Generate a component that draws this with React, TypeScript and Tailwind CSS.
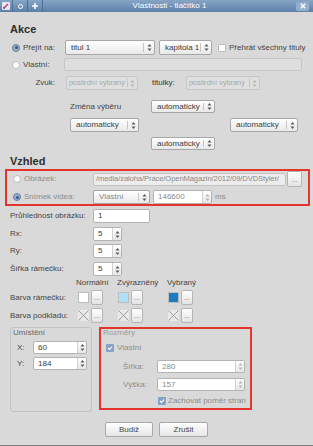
import React from "react";

const Arrows = ({ dim }: { dim?: boolean }) => (
  <svg width="5" height="9" viewBox="0 0 5 9">
    <polygon points="0.5,3.5 2.5,1 4.5,3.5" fill={dim ? "#b5b5b5" : "#5a5a5a"} />
    <polygon points="0.5,5.5 2.5,8 4.5,5.5" fill={dim ? "#b5b5b5" : "#5a5a5a"} />
  </svg>
);

const Select = ({ text, className = "", disabled }: { text: string; className?: string; disabled?: boolean }) => (
  <div
    className={`flex h-full items-center rounded-[2px] border ${
      disabled
        ? "border-[#c6c6c6] bg-[#dfdfdf] text-[#a9a9a9]"
        : "border-[#a6a6a6] bg-linear-to-b from-white to-[#e9e9e9] text-[#3a3a3a]"
    } ${className}`}
  >
    <span className={`flex-1 overflow-hidden whitespace-nowrap ${disabled ? "pl-[2px] text-[7.4px]" : "pl-[5px]"}`}>{text}</span>
    <div className="h-[70%] w-px shrink-0 bg-[#c4c4c4]" />
    <div className={`flex shrink-0 justify-center ${disabled ? "w-[9px]" : "w-[10px]"}`}>
      <Arrows dim={disabled} />
    </div>
  </div>
);

const Spin = ({ text, className = "", dim }: { text: string; className?: string; dim?: boolean }) => (
  <div className={`flex h-full items-center rounded-[2px] border border-[#b3b3b3] bg-white ${className}`}>
    <span className={`flex-1 truncate pl-[4px] ${dim ? "text-[#8a8a8a]" : "text-[#3a3a3a]"}`}>{text}</span>
    <div className="flex h-full w-[9px] items-center justify-center border-l border-[#d0d0d0] bg-linear-to-b from-white to-[#e6e6e6]">
      <Arrows dim={dim} />
    </div>
  </div>
);

const Radio = ({ on, className = "" }: { on?: boolean; className?: string }) =>
  on ? (
    <div className={`flex h-[8px] w-[8px] shrink-0 items-center justify-center rounded-full border border-[#6784a8] bg-[#93acc9] ${className}`}>
      <div className="h-[3px] w-[3px] rounded-full bg-[#3b5a82]" />
    </div>
  ) : (
    <div className={`h-[8px] w-[8px] shrink-0 rounded-full border border-[#bdbdbd] bg-white ${className}`} />
  );

const Check = ({ on, className = "" }: { on?: boolean; className?: string }) =>
  on ? (
    <div className={`flex h-[8px] w-[8px] shrink-0 items-center justify-center rounded-[1px] bg-[#86a2c4] ${className}`}>
      <svg width="6" height="6" viewBox="0 0 6 6">
        <path d="M1 3 L2.5 4.5 L5 1.5" stroke="white" strokeWidth="1.1" fill="none" />
      </svg>
    </div>
  ) : (
    <div className={`h-[8px] w-[8px] shrink-0 rounded-[1px] border border-[#bcbcbc] bg-white ${className}`} />
  );

const Dots = ({ className = "" }: { className?: string }) => (
  <div
    className={`flex h-[15px] w-[12px] shrink-0 items-center justify-center rounded-[2px] border border-[#b5b5b5] bg-linear-to-b from-white to-[#e4e4e4] text-[7px] leading-none text-[#777] ${className}`}
  >
    ...
  </div>
);

const Swatch = ({ color }: { color?: string }) =>
  color ? (
    <div className={`h-[11px] w-[11px] border border-[#bdbdbd] ${color}`} />
  ) : (
    <svg width="11" height="11" viewBox="0 0 11 11">
      <rect x="0" y="0" width="11" height="11" fill="#e9e9e9" />
      <path d="M0.5 0.5 L10.5 10.5 M10.5 0.5 L0.5 10.5" stroke="#8a8a8a" strokeWidth="0.8" />
    </svg>
  );

const ColorRow = ({ label, colors }: { label: string; colors: (string | undefined)[] }) => (
  <div className="flex h-[15px] items-center">
    <span className="w-[68px]">{label}</span>
    <Swatch color={colors[0]} />
    <Dots className="ml-[2px]" />
    <div className="ml-[15px]">
      <Swatch color={colors[1]} />
    </div>
    <Dots className="ml-[2px]" />
    <div className="ml-[25px]">
      <Swatch color={colors[2]} />
    </div>
    <Dots className="ml-[2px]" />
  </div>
);

export default function App() {
  return (
    <div className="flex h-[446px] w-[313px] flex-col overflow-hidden border-b border-[#7d7d7d] bg-[#d9d9d9] font-['Liberation_Sans',Arial,sans-serif] text-[8px] leading-none text-[#444]">
      {/* title bar */}
      <div className="flex h-[12px] shrink-0 items-center bg-linear-to-b from-[#87a6c7] to-[#5d80a8]">
        <div className="flex h-full items-center">
          <div className="flex h-full w-[12px] items-center justify-center">
            <svg width="8" height="8" viewBox="0 0 8 8">
              <rect x="0" y="0" width="8" height="8" rx="1" fill="#e9e4ef" />
              <path d="M1.5 6.5 L6 2" stroke="#c0487f" strokeWidth="1.6" />
              <path d="M1.5 6.5 L2.6 5.4" stroke="#6a4f8a" strokeWidth="1.6" />
            </svg>
          </div>
          <div className="h-full w-px bg-[#4f6f96]" />
          <div className="flex h-full w-[14px] items-center justify-center">
            <div className="h-[5px] w-[5px] rounded-full border-[1.5px] border-white" />
          </div>
          <div className="h-full w-px bg-[#4f6f96]" />
          <div className="flex h-full w-[14px] items-center justify-center">
            <svg width="6" height="6" viewBox="0 0 6 6">
              <path d="M3 0 V6 M0 3 H6" stroke="white" strokeWidth="1.6" />
            </svg>
          </div>
          <div className="h-full w-px bg-[#4f6f96]" />
        </div>
        <div className="flex-1 text-center text-[8px] text-white">Vlastnosti - tlačítko 1</div>
        <div className="mr-[4px] flex h-[9px] w-[13px] items-center justify-center rounded-[2px] bg-[#94afcc]">
          <svg width="6" height="6" viewBox="0 0 6 6">
            <path d="M0.8 0.8 L5.2 5.2 M5.2 0.8 L0.8 5.2" stroke="white" strokeWidth="1.5" />
          </svg>
        </div>
      </div>

      <div className="flex flex-col pl-[10px]">
        {/* Akce */}
        <div className="mt-[11px] h-[13px] text-[11px] font-bold leading-[13px] text-[#2e2e2e]">Akce</div>

        <div className="mt-[4px] flex h-[15px] items-center">
          <div className="flex w-[55px] items-center">
            <Radio on className="ml-[2px]" />
            <span className="ml-[3px]">Přejít na:</span>
          </div>
          <Select className="w-[90px]" text="titul 1" />
          <Select className="ml-[4px] w-[53px]" text="kapitola 1" />
          <Check className="ml-[6px]" />
          <span className="ml-[3px]">Přehrát všechny tituly</span>
        </div>

        <div className="mt-[3px] flex h-[13px] items-center">
          <div className="flex w-[54px] items-center">
            <Radio className="ml-[2px]" />
            <span className="ml-[3px]">Vlastní:</span>
          </div>
          <div className="h-full w-[238px] rounded-[2px] border border-[#c6c6c6] bg-[#dedede]" />
        </div>

        <div className="mt-[5px] flex h-[14px] items-center">
          <span className="w-[45px] text-right">Zvuk:</span>
          <Select disabled className="ml-[11px] w-[72px]" text="poslední vybraný" />
          <span className="ml-[14px] w-[34px] text-[#333]">titulky:</span>
          <Select disabled className="w-[74px]" text="poslední vybraný" />
        </div>

        <div className="mt-[10px] flex h-[13px] items-center">
          <span className="ml-[60px] w-[81px]">Změna výběru</span>
          <Select className="w-[64px]" text="automaticky" />
        </div>
        <div className="mt-[5px] flex h-[14px] items-center">
          <Select className="ml-[60px] w-[69px]" text="automaticky" />
          <Select className="ml-[91px] w-[68px]" text="automaticky" />
        </div>
        <div className="mt-[5px] flex h-[13px] items-center">
          <Select className="ml-[141px] w-[64px]" text="automaticky" />
        </div>

        {/* Vzhled */}
        <div className="mt-[4px] h-[14px] text-[11px] font-bold leading-[14px] text-[#2e2e2e]">Vzhled</div>

        <div className="ml-[-5px] mt-[1px] flex w-[305px] flex-col border-2 border-[#e3352c]">
          <div className="flex h-[16px] items-center">
            <div className="flex w-[86px] items-center">
              <Radio className="ml-[6px]" />
              <span className="ml-[3px] text-[#8c8c8c]">Obrázek:</span>
            </div>
            <div className="flex h-[13px] w-[193px] items-center overflow-hidden whitespace-nowrap rounded-[2px] border border-[#c4c4c4] bg-[#ececec] pl-[2px] text-[7.6px] tracking-[-0.1px] text-[#8a8a8a]">
              <span>/media/zaloha/Prace/OpenMagazin/2012/09/DVDStyler/</span>
            </div>
            <Dots className="ml-[1px] h-[16px] w-[15px]" />
          </div>
          <div className="mt-[3px] flex h-[14px] items-center">
            <div className="flex w-[86px] items-center">
              <Radio on className="ml-[6px]" />
              <span className="ml-[3px] text-[#8c8c8c]">Snímek videa:</span>
            </div>
            <Select className="w-[57px] !text-[#888]" text="Vlastní" />
            <Spin dim className="ml-[3px] w-[59px]" text="146600" />
            <span className="ml-[3px] text-[#8c8c8c]">ms</span>
          </div>
        </div>

        <div className="mt-[3px] flex h-[14px] items-center">
          <span className="w-[83px]">Průhlednost obrázku:</span>
          <div className="flex h-full w-[57px] items-center rounded-[2px] border border-[#b3b3b3] bg-white pl-[4px] text-[#3a3a3a]">1</div>
        </div>
        <div className="mt-[4px] flex h-[14px] items-center">
          <span className="w-[83px]">Rx:</span>
          <Spin className="w-[29px]" text="5" />
        </div>
        <div className="mt-[3px] flex h-[14px] items-center">
          <span className="w-[83px]">Ry:</span>
          <Spin className="w-[29px]" text="5" />
        </div>
        <div className="mt-[4px] flex h-[14px] items-center">
          <span className="w-[83px]">Šířka rámečku:</span>
          <Spin className="w-[29px]" text="5" />
        </div>

        <div className="mt-[2px] flex h-[10px] items-center">
          <span className="ml-[66px] w-[41px]">Normální</span>
          <span className="w-[50px]">Zvýrazněný</span>
          <span>Vybraný</span>
        </div>
        <div className="mt-[2px]">
          <ColorRow label="Barva rámečku:" colors={["bg-white", "bg-[#aee0f7]", "bg-[#1b7cc0]"]} />
        </div>
        <div className="mt-[3px]">
          <ColorRow label="Barva podkladu:" colors={[undefined, undefined, undefined]} />
        </div>

        <div className="mt-[4px] flex items-start">
          <div className="flex h-[85px] w-[82px] flex-col rounded-[3px] border border-[#c3c3c3]">
            <div className="ml-[2px] mt-[1px] h-[8px] leading-[8px] text-[#666]">Umístění</div>
            <div className="mt-[4px] flex h-[13px] items-center">
              <span className="ml-[6px] w-[16px]">X:</span>
              <Spin className="w-[54px]" text="60" />
            </div>
            <div className="mt-[3px] flex h-[13px] items-center">
              <span className="ml-[6px] w-[16px]">Y:</span>
              <Spin className="w-[54px]" text="184" />
            </div>
          </div>

          <div className="ml-[7px] flex h-[83px] w-[153px] flex-col border-2 border-[#e3352c]">
            <div className="ml-[2px] h-[8px] leading-[8px] text-[#9a9a9a]">Rozměry</div>
            <div className="mt-[6px] flex h-[9px] items-center">
              <Check on className="ml-[5px]" />
              <span className="ml-[3px] text-[#8c8c8c]">Vlastní</span>
            </div>
            <div className="mt-[8px] flex h-[13px] items-center">
              <span className="ml-[22px] w-[34px] text-[#8c8c8c]">Šířka:</span>
              <Spin dim className="w-[88px]" text="280" />
            </div>
            <div className="mt-[5px] flex h-[13px] items-center">
              <span className="ml-[22px] w-[34px] text-[#8c8c8c]">Výška:</span>
              <Spin dim className="w-[88px]" text="157" />
            </div>
            <div className="mt-[5px] flex h-[10px] items-center">
              <Check on className="ml-[57px]" />
              <span className="ml-[2px] text-[#8c8c8c]">Zachovat poměr stran</span>
            </div>
          </div>
        </div>
      </div>

      <div className="mt-[10px] flex h-[15px] justify-center gap-[6px]">
        <div className="flex w-[48px] items-center justify-center rounded-[2px] border border-[#a8a8a8] bg-linear-to-b from-white to-[#e6e6e6] text-[#444]">
          Budiž
        </div>
        <div className="flex w-[49px] items-center justify-center rounded-[2px] border border-[#a8a8a8] bg-linear-to-b from-white to-[#e6e6e6] text-[#444]">
          Zrušit
        </div>
      </div>
    </div>
  );
}
